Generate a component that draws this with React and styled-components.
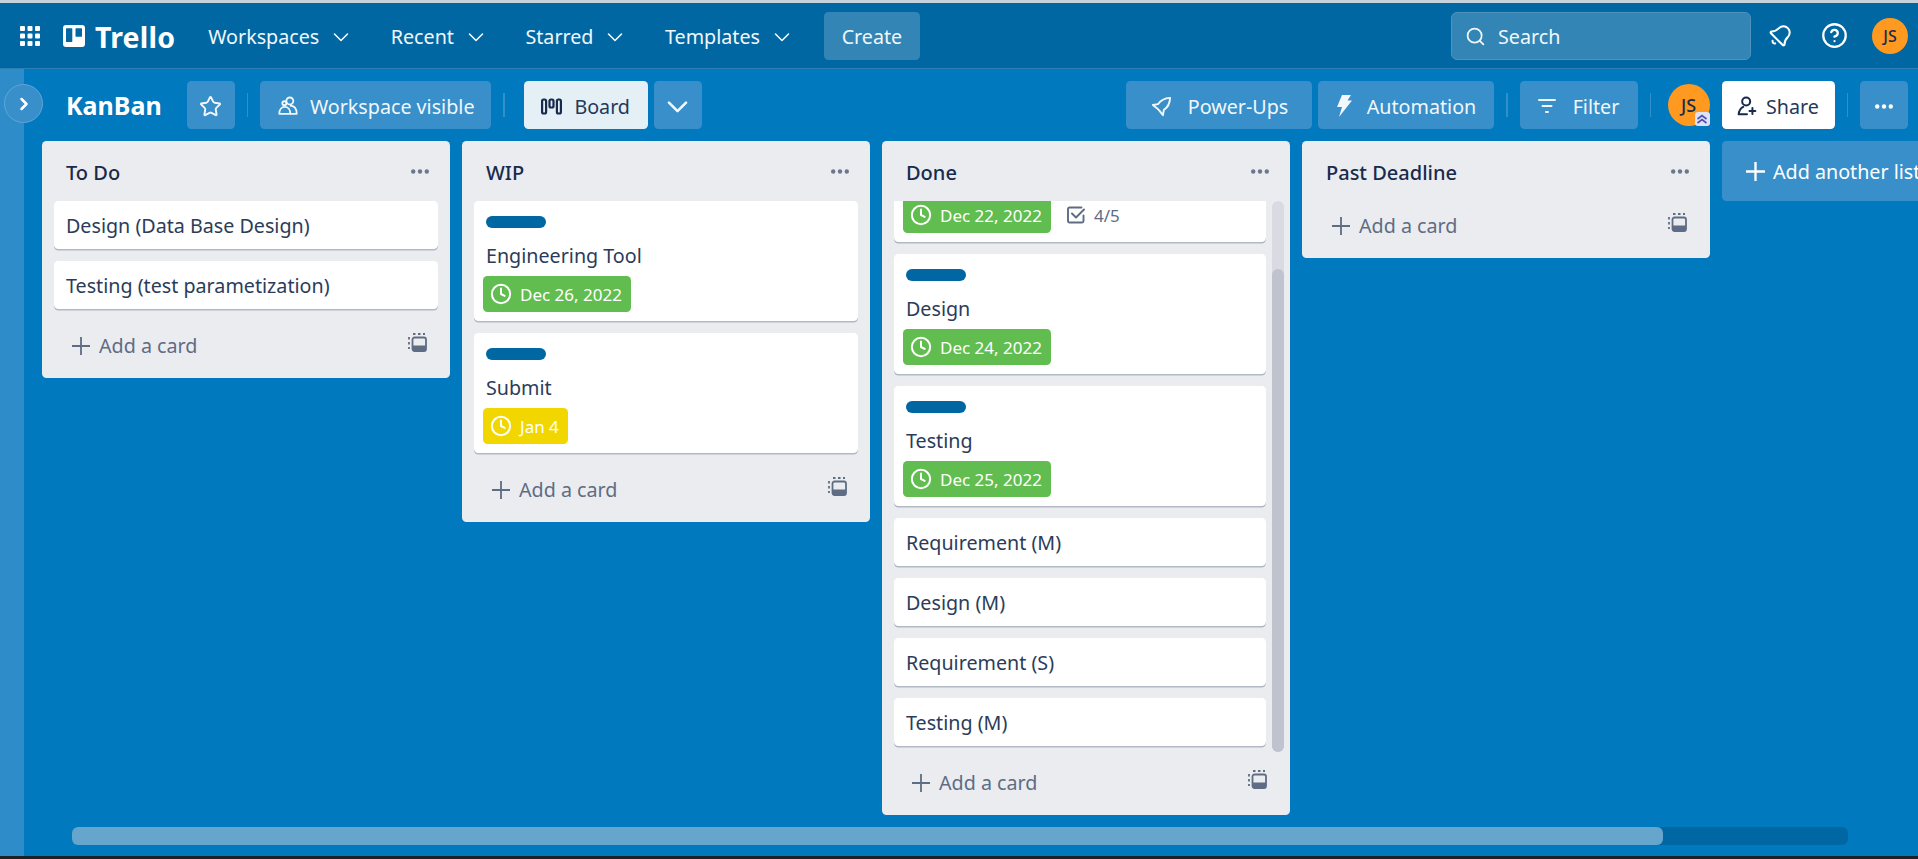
import React from 'react'
import styled, { createGlobalStyle } from 'styled-components'
import { Star, Search, CircleHelp, Clock, Bell, ChevronRight } from 'lucide-react'

const GlobalStyle = createGlobalStyle`
  html, body {
    margin: 0;
    height: 100%;
    overflow: hidden;
  }
  body {
    font-family: "Noto Sans", "Open Sans", sans-serif;
    color: #172b4d;
  }
  * { box-sizing: border-box; }
`

const Page = styled.div`
  height: 100vh;
  display: flex;
  flex-direction: column;
  background: #0079bf;
  border-top: 3px solid #c6d3dc;
  border-bottom: 3px solid #1b2125;
`

/* top nav */
const TopBar = styled.header`
  height: 66px;
  flex: none;
  display: flex;
  align-items: center;
  padding: 0 10px 0 20px;
  background: #0067a3;
  border-bottom: 1.5px solid #2a80b4;
  color: #fff;
`

const Logo = styled.div`
  display: flex;
  align-items: center;
  gap: 10px;
  margin-left: 23px;
  margin-right: 33px;
`

const LogoText = styled.span`
  padding-top: 2px;
  font-size: 28.5px;
  font-weight: 700;
  letter-spacing: 0.2px;
`

const NavItem = styled.div`
  display: flex;
  align-items: center;
  gap: 14px;
  padding-top: 2px;
  font-size: 19.7px;
  color: #f1f7fb;

  & + & {
    margin-left: 41.5px;
  }
`

const CreateButton = styled.button`
  width: 96px;
  height: 48px;
  margin-left: 34px;
  padding: 2px 0 0;
  border: 0;
  border-radius: 4.5px;
  background: #3385b5;
  color: #f1f7fb;
  font: inherit;
  font-size: 19.7px;
`

const SearchBox = styled.div`
  width: 300px;
  height: 48px;
  margin-left: auto;
  margin-right: 17px;
  display: flex;
  align-items: center;
  gap: 12px;
  padding: 2px 0 0 13px;
  border: 1.5px solid #4d93bd;
  border-radius: 6px;
  background: #3385b5;
  font-size: 19.7px;
  color: #f1f7fb;
`

const TopIcons = styled.div`
  display: flex;
  align-items: center;
  gap: 24px;
`

const TiltedBell = styled(Bell)`
  margin-right: 4px;
  transform: rotate(45deg);
`

const Avatar = styled.div`
  position: relative;
  flex: none;
  width: ${({ $size }) => $size}px;
  height: ${({ $size }) => $size}px;
  border-radius: 50%;
  display: flex;
  align-items: center;
  justify-content: center;
  background: #ff991f;
  color: #172b4d;
  font-size: ${({ $size }) => ($size > 40 ? 18 : 16)}px;
  font-weight: 500;
`

const MemberBadge = styled.span`
  position: absolute;
  right: 0;
  bottom: 0;
  width: 15px;
  height: 14px;
  border-radius: 3px;
  background: #dfe1f6;
  display: flex;
  align-items: center;
  justify-content: center;
`

/* sidebar + board */
const Body = styled.div`
  flex: 1;
  min-height: 0;
  display: flex;
`

const SideStrip = styled.aside`
  position: relative;
  flex: none;
  width: 24px;
  background: #2e8dc9;
`

const SideToggle = styled.div`
  position: absolute;
  top: 15px;
  left: 4px;
  width: 39px;
  height: 39px;
  border-radius: 50%;
  display: flex;
  align-items: center;
  justify-content: center;
  background: #388fc9;
  border: 1.5px solid #5ea6d6;
  color: #fff;
`

const Main = styled.main`
  flex: 1;
  min-width: 0;
  display: flex;
  flex-direction: column;
`

const BoardBar = styled.div`
  flex: none;
  display: flex;
  align-items: center;
  padding: 12px 10px 12px 42px;
  color: #fff;
`

const BoardName = styled.h1`
  margin: 0 25px 0 0;
  font-size: 25px;
  font-weight: 700;
`

const BarButton = styled.button`
  height: 48px;
  width: ${({ $w }) => $w}px;
  flex: none;
  display: flex;
  align-items: center;
  justify-content: center;
  gap: ${({ $gap }) => $gap ?? 15}px;
  padding: 2px 0 0;
  border: 0;
  border-radius: 4.5px;
  background: ${({ $bg }) => $bg || '#388fc9'};
  color: ${({ $dark }) => ($dark ? '#253858' : '#f1f7fb')};
  font: inherit;
  font-size: 19.7px;
  margin-left: ${({ $ml }) => $ml ?? 0}px;
`

const Divider = styled.span`
  flex: none;
  width: 1.5px;
  height: 24px;
  margin-left: 12px;
  margin-right: ${({ $right }) => $right ?? 12}px;
  background: #338fc9;
`

const Spacer = styled.div`
  flex: 1;
`

const Board = styled.div`
  flex: 1;
  min-height: 0;
  display: flex;
  align-items: flex-start;
  gap: 12px;
  padding-left: 18px;
  overflow: hidden;
`

const HScrollTrack = styled.div`
  flex: none;
  height: 18px;
  margin: 0 70px 11px 48px;
  border-radius: 6px;
  background: #0067a3;
`

const HScrollThumb = styled.div`
  width: ${({ $share }) => $share}%;
  height: 100%;
  border-radius: 6px;
  background: #66a6cc;
`

const List = styled.section`
  flex: none;
  width: 408px;
  display: flex;
  flex-direction: column;
  border-radius: 4.5px;
  background: #ebecf0;
`

const ListHead = styled.div`
  flex: none;
  height: 60px;
  display: flex;
  align-items: center;
  justify-content: space-between;
  padding: 0 21px 0 24px;
`

const ListTitle = styled.h2`
  margin: 0;
  padding-top: 2px;
  font-size: 20px;
  font-weight: 500;
  color: #172b4d;
`

const CardScroll = styled.div`
  position: relative;
  margin: 0 6px;
  padding: 0 ${({ $scrolled }) => ($scrolled ? 18 : 6)}px 0 6px;
  overflow: hidden;
`

const VScrollTrack = styled.div`
  position: absolute;
  top: 0;
  right: 0;
  bottom: 6px;
  width: 12px;
  padding-top: 68px;
  border-radius: 6px;
  background: #dadbe2;
`

const VScrollThumb = styled.div`
  height: 100%;
  border-radius: 6px;
  background: #bfc3ce;
`

const Card = styled.article`
  margin-bottom: 12px;
  padding: ${({ $labelled }) => ($labelled ? '15px 12px 9px' : '10px 12px 8px')};
  border-radius: 4.5px;
  background: #fff;
  box-shadow: 0 1.5px 0 #091e4240;
`

/* top of this card is scrolled out of the list */
const ScrolledCard = styled(Card)`
  padding: 0 12px 9px;
  border-radius: 0 0 4.5px 4.5px;
`

const Label = styled.div`
  width: 60px;
  height: 12px;
  margin-bottom: 13px;
  border-radius: 6px;
  background: #0067a3;
`

const CardTitle = styled.div`
  height: 30px;
  line-height: 30px;
  font-size: 19.7px;
  color: #2b3c5a;
`

const BadgeRow = styled.div`
  display: flex;
  align-items: center;
  gap: 16px;
  margin: ${({ $top }) => $top ?? 5}px 0 0 -3px;
`

const DueBadge = styled.span`
  height: 36px;
  display: inline-flex;
  align-items: center;
  gap: 8px;
  padding: 0 9px 0 7px;
  border-radius: 4.5px;
  background: ${({ $tone }) => ($tone === 'soon' ? '#f2d600' : '#61bd4f')};
  color: #fff;
  font-size: 17px;
`

const CheckBadge = styled.span`
  display: inline-flex;
  align-items: center;
  gap: 9px;
  color: #5e6c84;
  font-size: 17px;
`

const ListFoot = styled.div`
  flex: none;
  height: 57px;
  display: flex;
  align-items: flex-start;
  justify-content: space-between;
  padding: 12px 23px 0 30px;
  color: #5e6c84;
`

const AddCard = styled.div`
  display: flex;
  align-items: center;
  gap: 9px;
  font-size: 19.7px;
  line-height: 26px;
`

const AddList = styled.div`
  flex: none;
  width: 408px;
  height: 60px;
  display: flex;
  align-items: center;
  gap: 8px;
  padding-left: 24px;
  border-radius: 4.5px;
  background: #388fc9;
  color: #fff;
  font-size: 19.7px;
`

const Chevron = ({ size = 16, width = 1.6 }) => (
  <svg width={size} height={size} viewBox="0 0 16 16" fill="none" stroke="currentColor" strokeWidth={width} strokeLinecap="round" strokeLinejoin="round">
    <path d="M1.500 5l6.500 6.500L14.500 5" />
  </svg>
)

const PlusIcon = ({ size = 18, width = 1.8 }) => (
  <svg width={size} height={size} viewBox="0 0 18 18" fill="none" stroke="currentColor" strokeWidth={width}>
    <path d="M9 0v18M0 9h18" />
  </svg>
)

const GridIcon = () => (
  <svg width="20" height="20" viewBox="0 0 20 20" fill="#fff">
    {[0, 7.5, 15].flatMap((y) =>
      [0, 7.5, 15].map((x) => <rect key={`${x}-${y}`} x={x} y={y} width="5" height="5" rx="1" />)
    )}
  </svg>
)

const LogoIcon = () => (
  <svg width="22" height="22" viewBox="0 0 22 22" fill="#fff">
    <path fillRule="evenodd" d="M3 0h16a3 3 0 0 1 3 3v16a3 3 0 0 1-3 3H3a3 3 0 0 1-3-3V3a3 3 0 0 1 3-3zm.6 3.200a.6.6 0 0 0-.6.6v12.600c0 .4.3.6.6.6h5c.4 0 .7-.2.7-.6V3.800a.6.6 0 0 0-.7-.6zm9.600 0a.6.6 0 0 0-.7.6v7.400c0 .4.3.6.7.6h5.200c.3 0 .6-.2.6-.6V3.800a.6.6 0 0 0-.6-.6z" />
  </svg>
)

const RocketIcon = () => (
  <svg width="23" height="23" viewBox="0 0 24 24" fill="none" stroke="currentColor" strokeWidth="2" strokeLinejoin="round">
    <path d="M21 3C15.500 3.300 11 5.500 8.500 9.500L3 10.500l4.500 3.500 2.500 2.500 3.500 4.500 1-5.500C18.500 13 20.700 8.500 21 3z" />
  </svg>
)

const BoltIcon = () => (
  <svg width="16" height="24" viewBox="0 0 16 24" fill="currentColor">
    <path d="M6 1h9l-3.500 5.500H16L3 23l3-10H1z" />
  </svg>
)

const TeamIcon = () => (
  <svg width="22" height="22" viewBox="0 0 24 24" fill="none" stroke="currentColor" strokeWidth="2" strokeLinejoin="round">
    <circle cx="14" cy="6.500" r="3.800" />
    <path d="M2.500 20.500c0-4.500 2.500-7.500 6-7.500s6 3 6 7.500z" />
    <path d="M14 11.500c4 0 7.500 2.500 7.500 9h-7" />
    <circle cx="8" cy="9" r="2.200" />
  </svg>
)

const BoardIcon = () => (
  <svg width="21" height="17" viewBox="0 0 21 17" fill="none" stroke="#172b4d" strokeWidth="2.200">
    <rect x="1.100" y="1.500" width="4" height="14" rx="1.500" />
    <rect x="8.500" y="1.500" width="4" height="8" rx="1.500" />
    <rect x="15.900" y="1.500" width="4" height="14" rx="1.500" />
  </svg>
)

const FilterIcon = () => (
  <svg width="18" height="16" viewBox="0 0 18 16" fill="none" stroke="currentColor" strokeWidth="2" strokeLinecap="round">
    <path d="M1 2h16M4.500 8h9M8 14h2" />
  </svg>
)

const ShareIcon = () => (
  <svg width="20" height="20" viewBox="0 0 24 24" fill="none" stroke="#172b4d" strokeWidth="2.400" strokeLinecap="round" strokeLinejoin="round">
    <circle cx="11" cy="6.500" r="4.800" />
    <path d="M2 22c.5-5 2.500-7.500 5.500-9M2 22h10M18.500 14.500v7M15 18h7" />
  </svg>
)

const DotsIcon = ({ color = 'currentColor', size = 18 }) => (
  <svg width={size} height="5" viewBox="0 0 18 5" fill={color}>
    <circle cx="2.200" cy="2.500" r="2.200" />
    <circle cx="9" cy="2.500" r="2.200" />
    <circle cx="15.800" cy="2.500" r="2.200" />
  </svg>
)

const TemplateIcon = () => (
  <svg width="19" height="19" viewBox="0 0 19 19" fill="none" stroke="#5e6c84" strokeWidth="1.800">
    <path d="M5 1h2.500M10 1h2.500M15 1h2M1 4v2.500M1 9v2.500M1 14v2" />
    <rect x="4.500" y="4.500" width="13.500" height="13.500" rx="2" />
    <path d="M4.500 12.500h13.500v4a1.500 1.500 0 0 1-1.500 1.500H6a1.500 1.500 0 0 1-1.500-1.500z" fill="#5e6c84" stroke="none" />
  </svg>
)

const ChecklistIcon = () => (
  <svg width="18" height="18" viewBox="0 0 18 18" fill="none" stroke="currentColor" strokeWidth="1.900" strokeLinecap="round" strokeLinejoin="round">
    <path d="M16.500 9.500V15a1.500 1.500 0 0 1-1.500 1.500H2.500A1.500 1.500 0 0 1 1 15V3a1.500 1.500 0 0 1 1.500-1.500h12" />
    <path d="M5 7.500l4 4 8-8" />
  </svg>
)

const DoubleUp = () => (
  <svg width="12" height="12" viewBox="0 0 12 12" fill="none" stroke="#4b4fb0" strokeWidth="1.600">
    <path d="M1.500 6L6 2.500 10.500 6M1.500 10L6 6.500l4.500 3.500" />
  </svg>
)

const navItems = ['Workspaces', 'Recent', 'Starred', 'Templates']

const Due = ({ tone, children }) => (
  <DueBadge $tone={tone}>
    <Clock size={22} strokeWidth={2.2} />
    {children}
  </DueBadge>
)

const LabelledCard = ({ title, due, tone }) => (
  <Card $labelled>
    <Label />
    <CardTitle>{title}</CardTitle>
    <BadgeRow>
      <Due tone={tone}>{due}</Due>
    </BadgeRow>
  </Card>
)

const KanbanList = ({ title, children, scrolled }) => (
  <List>
    <ListHead>
      <ListTitle>{title}</ListTitle>
      <DotsIcon color="#6b778c" />
    </ListHead>
    {children && (
      <CardScroll $scrolled={scrolled}>
        {children}
        {scrolled && (
          <VScrollTrack>
            <VScrollThumb />
          </VScrollTrack>
        )}
      </CardScroll>
    )}
    <ListFoot>
      <AddCard>
        <PlusIcon />
        Add a card
      </AddCard>
      <TemplateIcon />
    </ListFoot>
  </List>
)

function App() {
  return (
    <Page>
      <GlobalStyle />
      <TopBar>
        <GridIcon />
        <Logo>
          <LogoIcon />
          <LogoText>Trello</LogoText>
        </Logo>
        {navItems.map((item) => (
          <NavItem key={item}>
            {item}
            <Chevron />
          </NavItem>
        ))}
        <CreateButton>Create</CreateButton>
        <SearchBox>
          <Search size={21} strokeWidth={2} />
          Search
        </SearchBox>
        <TopIcons>
          <TiltedBell size={25} strokeWidth={2} />
          <CircleHelp size={27} strokeWidth={2} />
          <Avatar $size={36}>JS</Avatar>
        </TopIcons>
      </TopBar>

      <Body>
        <SideStrip>
          <SideToggle>
            <ChevronRight size={20} strokeWidth={3} />
          </SideToggle>
        </SideStrip>
        <Main>
          <BoardBar>
            <BoardName>KanBan</BoardName>
            <BarButton $w={48}>
              <Star size={23} strokeWidth={2} />
            </BarButton>
            <Divider />
            <BarButton $w={231} $gap={11}>
              <TeamIcon />
              Workspace visible
            </BarButton>
            <Divider $right={19} />
            <BarButton $w={124} $bg="#e4f0f6" $dark $gap={12}>
              <BoardIcon />
              Board
            </BarButton>
            <BarButton $w={48} $ml={6}>
              <Chevron size={21} width={2} />
            </BarButton>
            <Spacer />
            <BarButton $w={186}>
              <RocketIcon />
              Power-Ups
            </BarButton>
            <BarButton $w={176} $ml={6}>
              <BoltIcon />
              Automation
            </BarButton>
            <Divider />
            <BarButton $w={118} $gap={17}>
              <FilterIcon />
              Filter
            </BarButton>
            <Divider $right={16.5} />
            <Avatar $size={42}>
              JS
              <MemberBadge>
                <DoubleUp />
              </MemberBadge>
            </Avatar>
            <BarButton $w={113} $ml={12} $bg="#fff" $dark $gap={9}>
              <ShareIcon />
              Share
            </BarButton>
            <Divider />
            <BarButton $w={48}>
              <DotsIcon color="#fff" />
            </BarButton>
          </BoardBar>

          <Board>
            <KanbanList title="To Do">
              <Card>
                <CardTitle>Design (Data Base Design)</CardTitle>
              </Card>
              <Card>
                <CardTitle>Testing (test parametization)</CardTitle>
              </Card>
            </KanbanList>

            <KanbanList title="WIP">
              <LabelledCard title="Engineering Tool" due="Dec 26, 2022" />
              <LabelledCard title="Submit" due="Jan 4" tone="soon" />
            </KanbanList>

            <KanbanList title="Done" scrolled>
              <ScrolledCard>
                <BadgeRow $top={-4}>
                  <Due>Dec 22, 2022</Due>
                  <CheckBadge>
                    <ChecklistIcon />
                    4/5
                  </CheckBadge>
                </BadgeRow>
              </ScrolledCard>
              <LabelledCard title="Design" due="Dec 24, 2022" />
              <LabelledCard title="Testing" due="Dec 25, 2022" />
              <Card>
                <CardTitle>Requirement (M)</CardTitle>
              </Card>
              <Card>
                <CardTitle>Design (M)</CardTitle>
              </Card>
              <Card>
                <CardTitle>Requirement (S)</CardTitle>
              </Card>
              <Card>
                <CardTitle>Testing (M)</CardTitle>
              </Card>
            </KanbanList>

            <KanbanList title="Past Deadline" />

            <AddList>
              <PlusIcon size={19} width={2.2} />
              Add another list
            </AddList>
          </Board>
          <HScrollTrack>
            <HScrollThumb $share={89.6} />
          </HScrollTrack>
        </Main>
      </Body>
    </Page>
  )
}

export default App
